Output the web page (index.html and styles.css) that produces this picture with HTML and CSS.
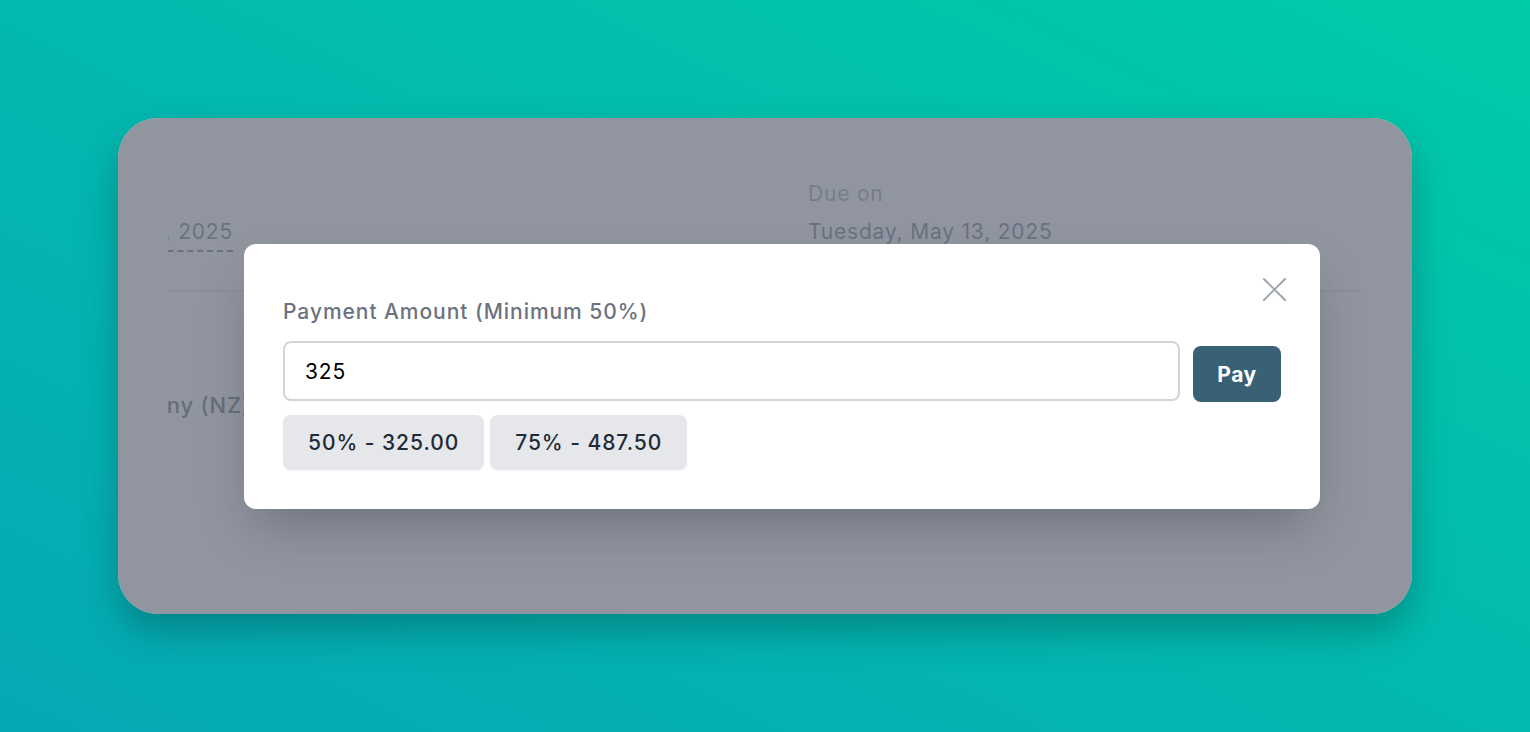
FILE: index.html
```html
<!DOCTYPE html>
<html lang="en">
<head>
  <meta charset="UTF-8" />
  <meta name="viewport" content="width=device-width, initial-scale=1.0"/>
  <title>Invoice Payment</title>
  <link rel="stylesheet" href="styles.css">
</head>

<body>
  <div class="page">
    <div class="card">
      <!-- Invoice details under the overlay -->
      <div class="invoice">
        <div class="dates">
          <div class="col-left">
            <div class="col-inner">
              <span class="label">Issued on</span>
              <span class="value dashed">Tuesday, April 29, 2025</span>
            </div>
          </div>
          <div class="col-right">
            <span class="label">Due on</span>
            <span class="value">Tuesday, May 13, 2025</span>
          </div>
        </div>
        <div class="divider"></div>
        <div class="company-row">
          <span class="company">Acme Company (NZ) Limited</span>
        </div>
      </div>

      <!-- Overlay -->
      <div class="overlay">
        <div class="modal">
          <button class="close" aria-label="Close">
            <svg viewBox="0 0 24 24" fill="none" stroke="currentColor" stroke-width="2" stroke-linecap="round">
              <path d="M1 1L23 23M23 1L1 23"/>
            </svg>
          </button>
          <label class="field-label" for="amount">Payment Amount (Minimum 50%)</label>
          <div class="field-row">
            <input id="amount" class="amount" type="text" value="325" />
            <button class="pay">Pay</button>
          </div>
          <div class="chips">
            <button class="chip">50% - 325.00</button>
            <button class="chip">75% - 487.50</button>
          </div>
        </div>
      </div>
    </div>
  </div>
</body>
</html>
```

FILE: styles.css
```css
* {
  margin: 0;
  padding: 0;
  box-sizing: border-box;
}

html, body {
  height: 100%;
}

body {
  font-family: 'Inter', 'Noto Sans', sans-serif;
  letter-spacing: 0.8px;
  background: linear-gradient(to top right, #05a8b4, #00cba9);
  overflow: hidden;
}

.page {
  height: 100%;
  display: flex;
  justify-content: center;
  align-items: center;
}

.card {
  position: relative;
  width: 1294px;
  height: 496px;
  background-color: #fff;
  border-radius: 40px;
  overflow: hidden;
  box-shadow: 0 18px 36px rgba(0, 60, 60, 0.35);
}

.invoice {
  padding: 62px 52px 0 50px;
}

.dates {
  display: flex;
}

.col-left {
  width: 65px;
  overflow: hidden;
  display: flex;
  justify-content: flex-end;
}

.col-inner {
  flex-shrink: 0;
  display: flex;
  flex-direction: column;
  align-items: flex-start;
  gap: 10px;
}

.col-right {
  margin-left: 575px;
  display: flex;
  flex-direction: column;
  gap: 10px;
}

.label {
  font-size: 21px;
  line-height: 28px;
  color: #979ca9;
  white-space: nowrap;
}

.value {
  font-size: 21px;
  line-height: 28px;
  color: #6b7280;
  white-space: nowrap;
}

.dashed {
  padding-bottom: 4px;
  border-bottom: 2px dashed #6b7280;
}

.divider {
  height: 2px;
  background-color: #e2e4e8;
  margin-top: 38px;
}

.company-row {
  margin-top: 99px;
  overflow: hidden;
}

.company {
  display: block;
  margin-left: -151px;
  font-size: 22px;
  line-height: 28px;
  font-weight: 500;
  color: #5b6270;
  white-space: nowrap;
}

.overlay {
  position: absolute;
  inset: 0;
  background-color: rgba(107, 114, 128, 0.75);
  padding: 126px 0 0 126px;
}

.modal {
  position: relative;
  width: 1076px;
  background-color: #fff;
  border-radius: 12px;
  padding: 54px 39px 39px 39px;
  box-shadow: 0 25px 50px -12px rgba(0, 0, 0, 0.25);
}

.close {
  position: absolute;
  top: 34px;
  right: 34px;
  width: 23px;
  height: 23px;
  background: none;
  border: none;
  color: #9ca3af;
  cursor: pointer;
}

.close svg {
  display: block;
  width: 23px;
  height: 23px;
}

.field-label {
  display: block;
  font-size: 21px;
  line-height: 28px;
  font-weight: 500;
  color: #6b7280;
  letter-spacing: 0.95px;
  margin-bottom: 15px;
}

.field-row {
  display: flex;
  align-items: flex-start;
  gap: 13px;
}

.amount {
  flex: 1;
  height: 60px;
  border: 2px solid #d1d5db;
  border-radius: 8px;
  padding: 0 20px;
  font-family: inherit;
  font-size: 21px;
  letter-spacing: 0.8px;
  color: #000;
  outline: none;
}

.pay {
  margin-top: 5px;
  width: 88px;
  height: 56px;
  background-color: #396175;
  color: #fff;
  border: none;
  border-radius: 8px;
  font-family: inherit;
  font-size: 21px;
  font-weight: 700;
  letter-spacing: 0.5px;
  cursor: pointer;
}

.chips {
  display: flex;
  gap: 6px;
  margin-top: 13px;
}

.chip {
  height: 55px;
  padding: 0 25px;
  background-color: #e5e7eb;
  color: #1f2b37;
  border: none;
  border-radius: 8px;
  font-family: inherit;
  font-size: 21px;
  font-weight: 500;
  letter-spacing: 0.95px;
  box-shadow: 0 1px 2px rgba(0, 0, 0, 0.05);
  cursor: pointer;
}
```
